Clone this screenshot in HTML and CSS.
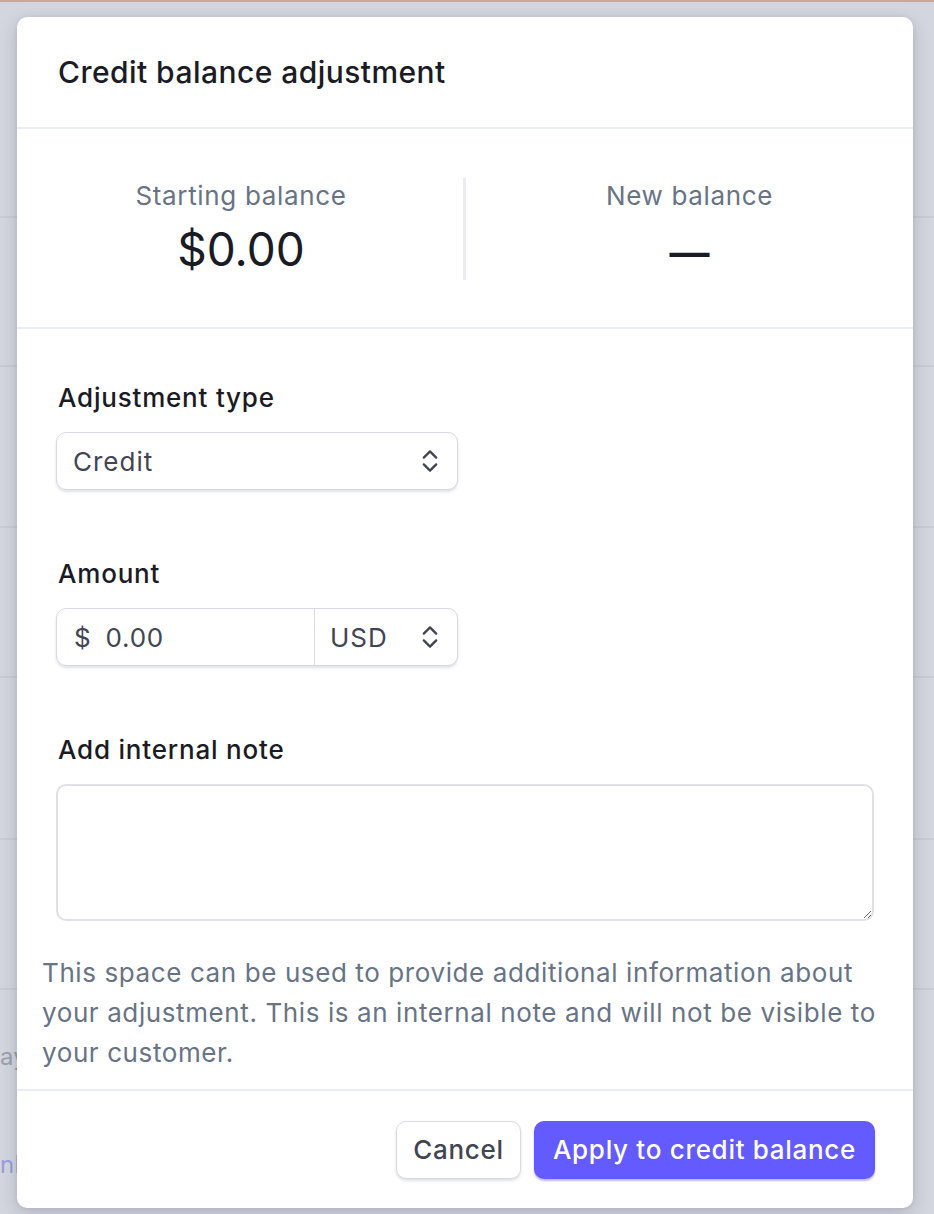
FILE: index.html
```html
<!DOCTYPE html>
<html lang="en">
<head>
<meta charset="utf-8">
<title>Credit balance adjustment</title>
<link rel="stylesheet" href="styles.css">
</head>
<body>
<div class="topstrip"></div>
<div class="backdrop">
  <div class="bg-row r1"></div>
  <div class="bg-row r2"></div>
  <div class="bg-row r3"></div>
  <div class="bg-row r4"></div>
  <div class="bg-row r5"></div>
  <div class="bg-row r6"></div>
  <div class="bg-row r7"><span class="bg-text">ay</span></div>
  <div class="bg-row r8"><span class="bg-link">nL</span></div>
</div>

<div class="modal" role="dialog" aria-labelledby="dlg-title">
  <header class="modal-header">
    <h1 id="dlg-title" class="modal-title">Credit balance adjustment</h1>
  </header>

  <section class="balances">
    <div class="balance">
      <div class="balance-label">Starting balance</div>
      <div class="balance-value">$0.00</div>
    </div>
    <div class="balance balance-new">
      <div class="balance-label">New balance</div>
      <div class="balance-value dash">—</div>
    </div>
  </section>

  <section class="form">
    <div class="field">
      <div class="field-label">Adjustment type</div>
      <div class="select select-type">
        <span class="select-text">Credit</span>
        <svg class="chev" viewBox="0 0 16 24" width="16" height="24" aria-hidden="true"><path d="M1.8 8.6 L8 2.4 L14.2 8.6 M1.8 15.4 L8 21.6 L14.2 15.4" fill="none" stroke="#414552" stroke-width="2.3" stroke-linecap="round" stroke-linejoin="round"/></svg>
      </div>
    </div>

    <div class="field">
      <div class="field-label">Amount</div>
      <div class="amount-group">
        <div class="amount-input"><span class="cur-sym">$</span><span class="amount-val">0.00</span></div>
        <div class="currency">
          <span class="select-text">USD</span>
          <svg class="chev" viewBox="0 0 16 24" width="16" height="24" aria-hidden="true"><path d="M1.8 8.6 L8 2.4 L14.2 8.6 M1.8 15.4 L8 21.6 L14.2 15.4" fill="none" stroke="#414552" stroke-width="2.3" stroke-linecap="round" stroke-linejoin="round"/></svg>
        </div>
      </div>
    </div>

    <div class="field">
      <div class="field-label">Add internal note</div>
      <textarea class="note" aria-label="Add internal note"></textarea>
    </div>

    <p class="help">This space can be used to provide additional information about your adjustment. This is an internal note and will not be visible to your customer.</p>
  </section>

  <footer class="modal-footer">
    <button class="btn btn-secondary" type="button">Cancel</button>
    <button class="btn btn-primary" type="button">Apply to credit balance</button>
  </footer>
</div>
</body>
</html>
```

FILE: styles.css
```css
* { box-sizing: border-box; }

html, body {
  margin: 0;
  padding: 0;
}

body {
  width: 934px;
  height: 1214px;
  overflow: hidden;
  position: relative;
  background: #d3d6de;
  font-family: Inter, "Noto Sans", "Liberation Sans", sans-serif;
  color: #1a1b25;
}

.topstrip {
  height: 2px;
  background: #c6a69d;
}

.backdrop {
  display: flex;
  flex-direction: column;
}

.bg-row {
  border-bottom: 2px solid #c9ccd5;
}
.r1 { height: 216px; }
.r2 { height: 149px; }
.r3 { height: 161px; }
.r4 { height: 150px; }
.r5 { height: 162px; }
.r6 { height: 150px; }
.r7 {
  height: 150px;
  border-bottom: none;
  padding-top: 52px;
}
.r8 {
  height: 100px;
  border-bottom: none;
  padding-top: 10px;
}

.bg-text {
  font-size: 24px;
  color: #9ca1ad;
}
.bg-link {
  font-size: 24px;
  color: #9c9de3;
}

/* Modal */
.modal {
  position: absolute;
  top: 17px;
  left: 17px;
  width: 896px;
  height: 1191px;
  background: #ffffff;
  border-radius: 10px;
  box-shadow: 0 6px 18px rgba(30, 35, 60, 0.18), 0 0 4px rgba(30, 35, 60, 0.08);
  display: flex;
  flex-direction: column;
  overflow: hidden;
}

.modal-header {
  height: 112px;
  padding: 0 41px;
  display: flex;
  align-items: center;
  border-bottom: 2px solid #ebeef1;
}

.modal-title {
  margin: 0;
  font-size: 30px;
  font-weight: 500;
  color: #1a1b25;
  letter-spacing: 0.45px;
}

.balances {
  display: grid;
  grid-template-columns: 1fr 1fr;
  padding: 49px 0 47px;
  border-bottom: 2px solid #ebeef1;
}

.balance {
  height: 102px;
  display: flex;
  flex-direction: column;
  align-items: center;
  justify-content: center;
  gap: 8px;
}

.balance-new {
  border-left: 3px solid #ebebf0;
  margin-left: -2px;
}

.balance-label {
  font-size: 26px;
  line-height: 32px;
  letter-spacing: 0.65px;
  color: #687385;
}

.balance-value {
  font-size: 46px;
  line-height: 58px;
  height: 58px;
  color: #1a1b25;
}

.dash {
  font-size: 40px;
  font-weight: 600;
  padding-top: 4px;
  line-height: 58px;
  overflow: visible;
}

.form {
  flex: 1;
  padding: 53px 39px 0;
  display: flex;
  flex-direction: column;
}

.field {
  display: flex;
  flex-direction: column;
  gap: 18px;
  margin-bottom: 68px;
}

.field:nth-child(3) {
  margin-bottom: 32px;
}

.field-label {
  font-size: 26px;
  line-height: 32px;
  font-weight: 500;
  letter-spacing: 0.8px;
  color: #1a1b25;
  padding-left: 2px;
}

.select {
  width: 402px;
  height: 58px;
  border: 1.5px solid #d8dae0;
  border-radius: 10px;
  box-shadow: 0 2px 3px rgba(30, 40, 70, 0.14);
  display: flex;
  align-items: center;
  justify-content: space-between;
  padding: 0 19px 0 16px;
  background: #fff;
}

.select-text {
  font-size: 26px;
  letter-spacing: 1px;
  color: #414552;
}

.chev {
  display: block;
}

.amount-group {
  width: 402px;
  height: 58px;
  display: flex;
  border: 1.5px solid #d8dae0;
  border-radius: 10px;
  box-shadow: 0 2px 3px rgba(30, 40, 70, 0.14);
  background: #fff;
}

.amount-input {
  width: 257px;
  display: flex;
  align-items: center;
  padding-left: 17px;
  font-size: 26px;
  letter-spacing: 0.8px;
  color: #414552;
}

.cur-sym {
  margin-right: 14px;
}

.currency {
  flex: 1;
  display: flex;
  align-items: center;
  justify-content: space-between;
  padding: 0 19px 0 15px;
  border-left: 1.5px solid #d8dae0;
}

.note {
  display: block;
  width: 818px;
  height: 137px;
  border: 2px solid #e0e1e4;
  border-radius: 10px;
  resize: both;
  font-family: inherit;
  font-size: 24px;
  margin: 0;
  padding: 12px 16px;
  outline: none;
}

.help {
  margin: 0 -14px;
  font-size: 26px;
  line-height: 40px;
  letter-spacing: 0.6px;
  color: #687385;
}

.modal-footer {
  height: 119px;
  border-top: 2px solid #ebeef1;
  display: flex;
  align-items: center;
  justify-content: flex-end;
  gap: 13px;
  padding-right: 38px;
}

.btn {
  height: 58px;
  border-radius: 10px;
  font-family: inherit;
  font-size: 26px;
  font-weight: 500;
  letter-spacing: 0.7px;
  padding: 0 10px;
  cursor: pointer;
}

.btn-secondary {
  width: 125px;
  background: #fff;
  color: #414552;
  border: 1.5px solid #d8dae0;
  box-shadow: 0 2px 3px rgba(30, 40, 70, 0.14);
}

.btn-primary {
  width: 341px;
  background: #635bff;
  color: #ffffff;
  border: none;
  box-shadow: 0 2px 2px rgba(60, 50, 200, 0.35);
}
```
